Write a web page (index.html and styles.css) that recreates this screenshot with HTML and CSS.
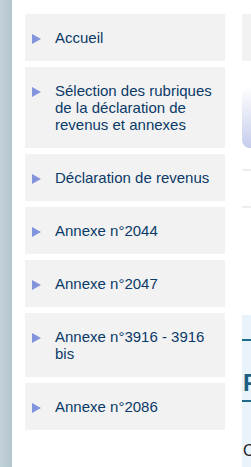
FILE: index.html
```html
<!DOCTYPE html>
<html lang="fr">
<head>
    <meta charset="UTF-8">
    <meta name="viewport" content="width=device-width, initial-scale=1.0">
    <title>Déclaration de revenus</title>
    <link rel="stylesheet" href="styles.css">
</head>
<body>
    <div class="page">
        <div class="side-strip"></div>
        <ul class="menu">
            <li><a href="#"><span class="arrow"></span><span>Accueil</span></a></li>
            <li><a href="#"><span class="arrow"></span><span>Sélection des rubriques de la déclaration de revenus et annexes</span></a></li>
            <li><a href="#"><span class="arrow"></span><span>Déclaration de revenus</span></a></li>
            <li><a href="#"><span class="arrow"></span><span>Annexe n°2044</span></a></li>
            <li><a href="#"><span class="arrow"></span><span>Annexe n°2047</span></a></li>
            <li><a href="#"><span class="arrow"></span><span>Annexe n°3916 - 3916 bis</span></a></li>
            <li><a href="#"><span class="arrow"></span><span>Annexe n°2086</span></a></li>
        </ul>
        <div class="main">
            <div class="top-box"></div>
            <div class="intro-box"></div>
            <div class="rule rule-first"></div>
            <div class="rule rule-second"></div>
            <div class="panel">
                <div class="panel-line"></div>
                <h2 class="panel-title">F</h2>
                <p class="panel-text">C</p>
            </div>
        </div>
    </div>
</body>
</html>
```

FILE: styles.css
```css
body {
    margin: 0;
    font-family: 'Liberation Sans', Arial, sans-serif;
    background-color: #ffffff;
    overflow: hidden;
}
.page {
    display: flex;
    align-items: flex-start;
    min-height: 467px;
}
.side-strip {
    flex: 0 0 12px;
    align-self: stretch;
    min-height: 467px;
    background: linear-gradient(90deg, #c3d2d9, #b2c5cd);
}
.menu {
    flex: 0 0 200px;
    list-style: none;
    margin: 14px 0 0 13px;
    padding: 0;
    display: flex;
    flex-direction: column;
    gap: 6px;
}
.menu li {
    background-color: #f2f2f2;
}
.menu a {
    display: flex;
    align-items: flex-start;
    padding: 15px 8px 15px 7px;
    font-size: 15px;
    line-height: 17px;
    color: #0b3a68;
    text-decoration: none;
}
.arrow {
    flex: 0 0 auto;
    width: 0;
    height: 0;
    margin: 5px 14px 0 0;
    border-top: 5px solid transparent;
    border-bottom: 5px solid transparent;
    border-left: 9px solid #8494dc;
}
.main {
    flex: 0 0 300px;
    margin-left: 17px;
    margin-top: 14px;
}
.top-box {
    height: 47px;
    background-color: #f2f2f2;
}
.intro-box {
    height: 62px;
    margin-top: 25px;
    border-radius: 8px;
    background: linear-gradient(180deg, #ffffff, #c6cdec);
}
.rule {
    height: 2px;
    background-color: #eeeeee;
}
.rule-first {
    margin-top: 21px;
}
.rule-second {
    margin-top: 35px;
}
.panel {
    margin-top: 107px;
    padding-top: 24px;
    height: 200px;
    background-color: #e8f3fc;
}
.panel-line {
    height: 2px;
    background-color: #1f6b8a;
}
.panel-title {
    margin: 28px 0 0 0;
    padding: 0 0 3px 1px;
    border-bottom: 2px solid #1f6b8a;
    font-size: 24px;
    line-height: 28px;
    color: #1f5f82;
}
.panel-text {
    margin: 40px 0 0 1px;
    font-size: 16px;
    color: #222222;
}
```
